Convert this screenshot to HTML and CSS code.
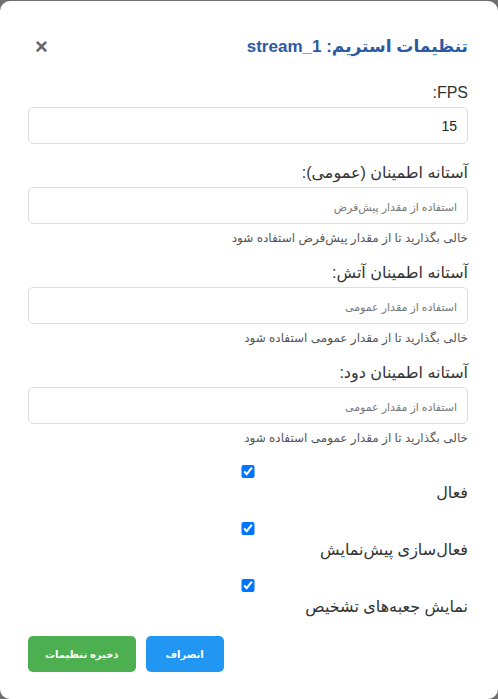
FILE: index.html
```html
<!DOCTYPE html>
<html lang="fa" dir="rtl">
<head>
<meta charset="utf-8">
<title>تنظیمات استریم</title>
<link rel="stylesheet" href="styles.css">
</head>
<body>
<div class="modal">
  <div class="modal-header">
    <h2 class="modal-title">تنظیمات استریم: stream_1</h2>
    <span class="close">&times;</span>
  </div>
  <form class="form">
    <div class="form-group">
      <label class="field-label">FPS:</label>
      <input class="text-input" type="text" value="15">
    </div>
    <div class="form-group">
      <label class="field-label">آستانه اطمینان (عمومی):</label>
      <input class="text-input" type="text" placeholder="استفاده از مقدار پیش‌فرض">
      <div class="help">خالی بگذارید تا از مقدار پیش‌فرض استفاده شود</div>
    </div>
    <div class="form-group">
      <label class="field-label">آستانه اطمینان آتش:</label>
      <input class="text-input" type="text" placeholder="استفاده از مقدار عمومی">
      <div class="help">خالی بگذارید تا از مقدار عمومی استفاده شود</div>
    </div>
    <div class="form-group">
      <label class="field-label">آستانه اطمینان دود:</label>
      <input class="text-input" type="text" placeholder="استفاده از مقدار عمومی">
      <div class="help">خالی بگذارید تا از مقدار عمومی استفاده شود</div>
    </div>
    <div class="checks">
      <div class="check-group">
        <input class="check" type="checkbox" checked>
        <div class="check-label">فعال</div>
      </div>
      <div class="check-group">
        <input class="check" type="checkbox" checked>
        <div class="check-label">فعال‌سازی پیش‌نمایش</div>
      </div>
      <div class="check-group">
        <input class="check" type="checkbox" checked>
        <div class="check-label">نمایش جعبه‌های تشخیص</div>
      </div>
    </div>
    <div class="actions">
      <button type="button" class="btn btn-cancel">انصراف</button>
      <button type="button" class="btn btn-save">ذخیره تنظیمات</button>
    </div>
  </form>
</div>
</body>
</html>
```
FILE: styles.css
```css
html, body {
  margin: 0;
  padding: 0;
}
body {
  background: #6f6f6f;
  font-family: "Liberation Sans", "DejaVu Sans", sans-serif;
  color: #333;
}
.modal {
  box-sizing: border-box;
  width: 498px;
  height: 698px;
  margin-top: 1px;
  background: #fff;
  border-radius: 10px;
  padding: 26px 30px 0 28px;
}
.modal-header {
  display: flex;
  justify-content: space-between;
  align-items: center;
  margin-bottom: 16px;
}
.modal-title {
  margin: 0;
  font-size: 17px;
  font-weight: bold;
  color: #2c5aa0;
  line-height: 40px;
}
.close {
  font-size: 22px;
  color: #666;
  font-weight: bold;
  line-height: 1;
  margin-left: 7px;
}
.form-group {
  margin-bottom: 19px;
}
.field-label {
  display: block;
  font-size: 16px;
  line-height: 20px;
  margin-bottom: 4px;
  color: #333;
}
.text-input {
  display: block;
  box-sizing: border-box;
  width: 100%;
  height: 37px;
  padding: 8px 10px;
  border: 1px solid #ddd;
  border-radius: 5px;
  font-family: "Liberation Sans", "DejaVu Sans", sans-serif;
  font-size: 14px;
  color: #222;
  background: #fff;
  direction: rtl;
  text-align: right;
}
.text-input::placeholder {
  color: #777;
  font-size: 11px;
}
.help {
  font-size: 12px;
  color: #555;
  margin-top: 6px;
  margin-bottom: -2px;
  line-height: 16px;
}
.checks {
  padding-top: 1px;
}
.check-group {
  margin-bottom: 17px;
}
.check {
  display: block;
  width: 100%;
  height: 13px;
  margin: 1px 0 3px;
  accent-color: #0075ff;
}
.check-label {
  font-size: 16px;
  line-height: 24px;
  color: #333;
}
.actions {
  display: flex;
  justify-content: flex-end;
  gap: 10px;
}
.btn {
  height: 36px;
  border: none;
  border-radius: 5px;
  color: #fff;
  font-family: "Liberation Sans", "DejaVu Sans", sans-serif;
  font-size: 10px;
  font-weight: bold;
  padding: 0 20px;
}
.btn-cancel {
  background: #2196f3;
}
.btn-save {
  background: #4caf50;
  padding: 0 17px;
}
```
